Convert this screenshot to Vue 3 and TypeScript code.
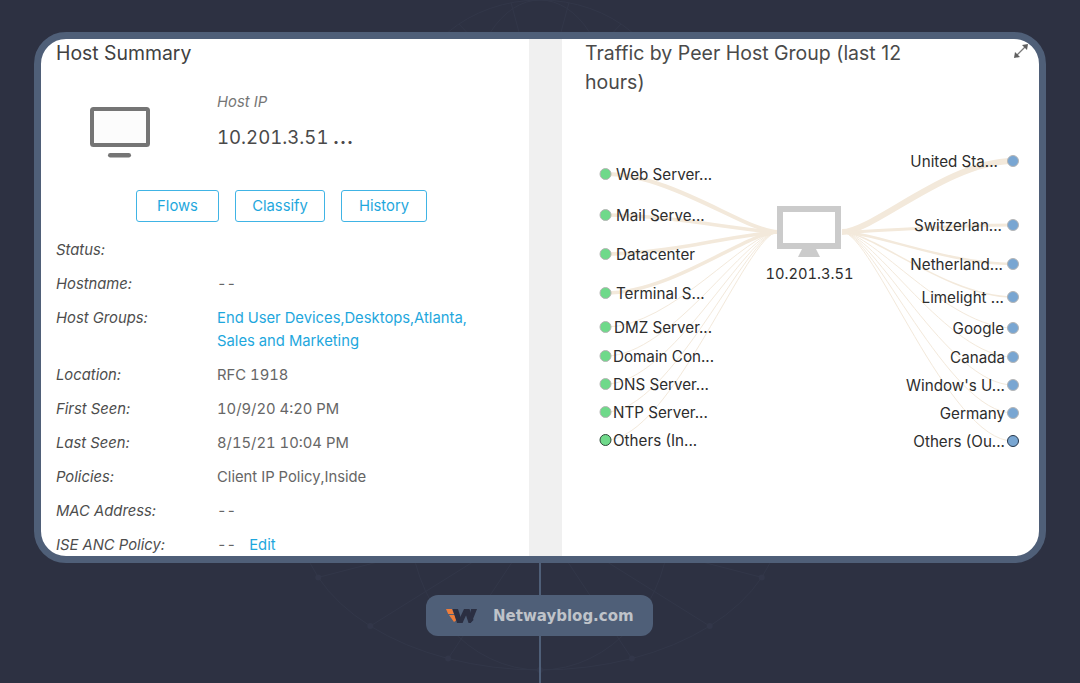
<script setup lang="ts">
interface Node { label: string; x: number; y: number; w: number; last?: boolean }
const left: Node[] = [
  { label: 'Web Server...', x: 616, y: 174, w: 4 },
  { label: 'Mail Serve...', x: 616, y: 215, w: 3.5 },
  { label: 'Datacenter', x: 616, y: 254, w: 3.5 },
  { label: 'Terminal S...', x: 616, y: 293, w: 3.5 },
  { label: 'DMZ Server...', x: 614, y: 327, w: 1 },
  { label: 'Domain Con...', x: 613, y: 356, w: 1 },
  { label: 'DNS Server...', x: 613, y: 384, w: 1 },
  { label: 'NTP Server...', x: 613, y: 412, w: 1 },
  { label: 'Others (In...', x: 613, y: 440, w: 1, last: true },
]
const right: Node[] = [
  { label: 'United Sta...', x: 998, y: 161, w: 6 },
  { label: 'Switzerlan...', x: 1002, y: 225, w: 3 },
  { label: 'Netherland...', x: 1003, y: 264, w: 2.5 },
  { label: 'Limelight ...', x: 1004, y: 297, w: 1.5 },
  { label: 'Google', x: 1004, y: 328, w: 1 },
  { label: 'Canada', x: 1005, y: 357, w: 1 },
  { label: "Window's U...", x: 1005, y: 385, w: 1 },
  { label: 'Germany', x: 1005, y: 413, w: 1 },
  { label: 'Others (Ou...', x: 1005, y: 441, w: 1, last: true },
]
const OX = 41
const OY = 39
function curve(sx: number, ex: number, y: number): string {
  const sy = 232
  const c1 = sx + (ex - sx) * 0.18
  const c2 = sx + (ex - sx) * 0.62
  return `M${sx - OX} ${sy - OY} C${c1 - OX} ${sy - OY} ${c2 - OX} ${y - OY} ${ex - OX} ${y - OY}`
}
const leftPath = (n: Node): string => curve(778, 606, n.y)
const rightPath = (n: Node): string => curve(842, 1013, n.y)
const rows = [
  { k: 'Status:', v: '' },
  { k: 'Hostname:', v: '--' },
  { k: 'Host Groups:', v: '' },
  { k: 'Location:', v: 'RFC 1918' },
  { k: 'First Seen:', v: '10/9/20 4:20 PM' },
  { k: 'Last Seen:', v: '8/15/21 10:04 PM' },
  { k: 'Policies:', v: 'Client IP Policy,Inside' },
  { k: 'MAC Address:', v: '--' },
  { k: 'ISE ANC Policy:', v: '--' },
]
const rays = Array.from({ length: 14 }, (_, i) => {
  const a = (Math.PI * 2 * i) / 14
  return { x: 540 + Math.cos(a) * 130, y: 110 + Math.sin(a) * 110 }
})
const raysB = Array.from({ length: 16 }, (_, i) => {
  const a = (Math.PI * 2 * i) / 16
  return { x: 540 + Math.cos(a) * 240, y: 520 + Math.sin(a) * 150 }
})
</script>

<template>
  <div class="page">
    <svg class="globe" width="1080" height="683" viewBox="0 0 1080 683" aria-hidden="true">
      <g fill="none" stroke="#3c4256" stroke-width="1">
        <ellipse cx="540" cy="110" rx="130" ry="110" />
        <ellipse cx="540" cy="110" rx="70" ry="110" />
        <ellipse cx="540" cy="520" rx="240" ry="150" />
        <ellipse cx="540" cy="520" rx="130" ry="150" />
        <line v-for="(p, i) in rays" :key="'a' + i" x1="540" y1="110" :x2="p.x" :y2="p.y" />
        <line v-for="(p, i) in raysB" :key="'b' + i" x1="540" y1="520" :x2="p.x" :y2="p.y" />
      </g>
      <g fill="#3c4256">
        <circle v-for="(p, i) in raysB" :key="'c' + i" :cx="p.x" :cy="p.y" r="3" />
      </g>
    </svg>

    <main class="frame">
      <section class="summary">
        <h2 class="title">Host Summary</h2>
        <div class="host">
          <svg class="host-icon" width="60" height="52" viewBox="0 0 60 52">
            <rect x="2" y="2" width="56" height="36" rx="1.500" fill="#fcfcfc" stroke="#757575" stroke-width="4" />
            <rect x="18" y="46" width="23" height="4.500" rx="2.200" fill="#757575" />
          </svg>
          <div class="host-text">
            <div class="host-label">Host IP</div>
            <div class="host-ip">10.201.3.51 <b>...</b></div>
          </div>
        </div>
        <div class="actions">
          <button class="btn flows">Flows</button>
          <button class="btn classify">Classify</button>
          <button class="btn history">History</button>
        </div>
        <dl class="rows">
          <div v-for="r in rows" :key="r.k" class="row" :class="{ tall: r.k === 'Host Groups:' }">
            <dt>{{ r.k }}</dt>
            <dd v-if="r.k === 'Host Groups:'" class="link">End User Devices,Desktops,Atlanta,<br />Sales and Marketing</dd>
            <dd v-else>{{ r.v }}<a v-if="r.k === 'ISE ANC Policy:'" class="link edit">Edit</a></dd>
          </div>
        </dl>
      </section>

      <div class="divider"></div>

      <section class="traffic">
        <h2 class="title traffic-title">Traffic by Peer Host Group (last 12 hours)</h2>
        <svg class="expand" width="16" height="16" viewBox="0 0 16 16">
          <path d="M3.500 12.500 L12.500 3.500" fill="none" stroke="#7a7a7a" stroke-width="1.200" />
          <path d="M15 1 L14 7 L9 2 Z" fill="#5f5f5f" />
          <path d="M1 15 L2 9 L7 14 Z" fill="#5f5f5f" />
        </svg>
      </section>

      <svg class="diagram" width="998" height="517" viewBox="0 0 998 517">
        <g fill="none" stroke="#f3e9db">
          <path v-for="n in left" :key="n.label" :d="leftPath(n)" :stroke-width="n.w" />
          <path v-for="n in right" :key="n.label" :d="rightPath(n)" :stroke-width="n.w" />
        </g>
        <rect x="739" y="170" width="58" height="37" fill="#fff" stroke="#cbcbcb" stroke-width="6" />
        <path d="M757 218 L761 210 H775 L779 218 Z" fill="#cbcbcb" />
        <text x="768.500" y="240" class="t center num">10.201.3.51</text>
        <g v-for="n in left" :key="n.label">
          <circle :cx="605.500 - OX" :cy="n.y - OY" r="5.500" fill="#6fd98a" :stroke="n.last ? '#2f4a3a' : '#b5b5b5'" stroke-width="1" />
          <text :x="n.x - OX" :y="n.y - OY + 6" class="t">{{ n.label }}</text>
        </g>
        <g v-for="n in right" :key="n.label">
          <circle :cx="1013 - OX" :cy="n.y - OY" r="5.500" fill="#79a6d2" :stroke="n.last ? '#26364a' : '#b5b5b5'" stroke-width="1" />
          <text :x="n.x - OX" :y="n.y - OY + 6" class="t end">{{ n.label }}</text>
        </g>
      </svg>
    </main>

    <div class="stem"></div>

    <footer class="badge">
      <svg width="31" height="16" viewBox="0 0 31 16">
        <path d="M0 1 H6 L8 6 H2.200 Z M3 7 H8.500 L10.500 12 L8 14 Z" fill="#ef7d3a" />
        <g fill="#2b2f42">
          <path d="M6.500 1 H12 L16.500 15 H11 Z" />
          <path d="M11.500 15 L18 1 H23 L16.500 15 Z" />
          <path d="M18 1 H23.500 L27.500 12 L24.500 15 H22.500 Z" />
          <path d="M23 15 L25 1 H31 L27 11 L24.500 15 Z" />
        </g>
      </svg>
      <span class="badge-text">Netwayblog.com</span>
    </footer>
  </div>
</template>

<style scoped>
.page {
  position: relative;
  width: 1080px;
  height: 683px;
  overflow: hidden;
  background: #2d3142;
  padding-top: 32px;
  box-sizing: border-box;
  font-family: Inter, "Liberation Sans", sans-serif;
}
.globe { position: absolute; left: 0; top: 0; opacity: 0.35; }
.frame {
  position: relative;
  display: flex;
  width: 998px;
  height: 517px;
  margin-left: 34px;
  border: 7px solid #4f5f78;
  border-radius: 32px;
  background: #fff;
  overflow: hidden;
}
.summary { width: 488px; flex: none; padding-left: 15px; box-sizing: border-box; }
.divider { width: 33px; flex: none; background: #f0f0f0; }
.traffic { flex: 1; position: relative; padding-left: 23px; }
.title {
  margin: 0;
  font-size: 19.400px;
  font-weight: 400;
  line-height: 29px;
  color: #414141;
}
.traffic-title { color: #4a4a4a; width: 345px; font-size: 19.500px; }
.expand { position: absolute; right: 10px; top: 4px; }
.host { display: flex; align-items: flex-start; margin-top: 39px; }
.host-icon { margin-left: 34px; flex: none; }
.host-text { margin-left: 67px; margin-top: -15px; }
.host-label { font-size: 14.800px; font-style: italic; color: #767676; line-height: 20px; }
.host-ip { font-size: 18.600px; color: #4a4a4a; line-height: 26px; margin-top: 12px; font-feature-settings: "tnum"; }
.host-ip b { font-weight: 700; letter-spacing: 2px; }
.actions { display: flex; margin-top: 31px; margin-left: 80px; }
.btn {
  height: 32px;
  box-sizing: border-box;
  padding: 0;
  background: #fff;
  border: 1.500px solid #40b4e5;
  border-radius: 3px;
  color: #1ea7dd;
  font: 400 14.800px Inter, "Liberation Sans", sans-serif;
}
.flows { width: 83px; margin-right: 16px; }
.classify { width: 90px; margin-right: 16px; }
.history { width: 86px; }
.rows { margin: 17px 0 0; }
.row { display: flex; min-height: 34px; line-height: 23px; font-size: 14.800px; }
.row.tall { min-height: 57px; }
dt { width: 161px; flex: none; font-style: italic; color: #4d4d4d; }
dd { margin: 0; color: #666; font-feature-settings: "tnum"; }
.link { color: #1ea7dd; }
.edit { margin-left: 13px; }
.diagram { position: absolute; left: 0; top: 0; pointer-events: none; }
.t {
  font-family: Inter, "Liberation Sans", sans-serif;
  font-size: 15.200px;
  fill: #2d2d2d;
}
.num { font-feature-settings: "tnum"; font-size: 14.700px; }
.center { text-anchor: middle; }
.end { text-anchor: end; }
.stem {
  position: absolute;
  left: 539px;
  top: 563px;
  width: 2px;
  height: 120px;
  background: #4f5f78;
}
.badge {
  position: absolute;
  left: 426px;
  top: 595px;
  width: 227px;
  height: 41px;
  border-radius: 12px;
  background: #4f5f78;
  display: flex;
  align-items: center;
  padding-left: 20px;
  box-sizing: border-box;
}
.badge-text {
  margin-left: 16px;
  font: 700 15px "DejaVu Sans", sans-serif;
  color: #bfc3c9;
}
</style>
